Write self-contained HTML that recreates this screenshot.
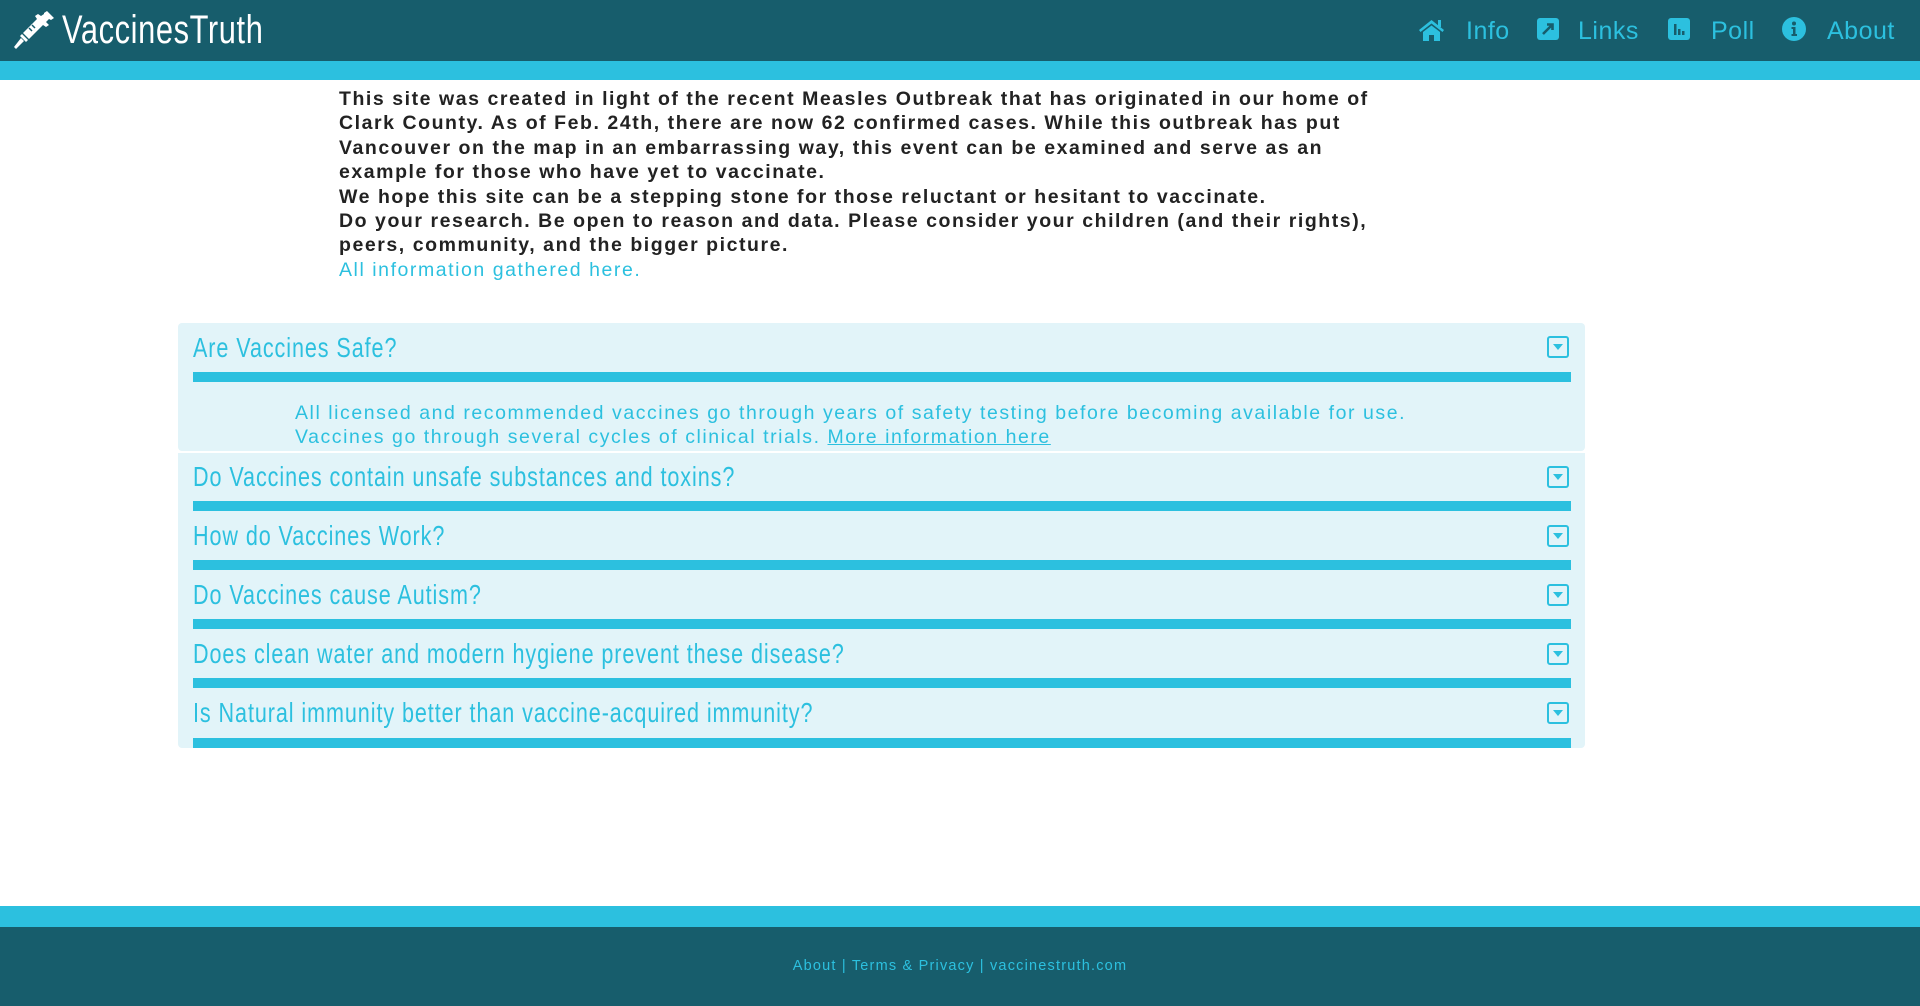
<!DOCTYPE html>
<html><head><meta charset="utf-8"><style>
*{margin:0;padding:0;box-sizing:border-box}
body{width:1920px;height:1006px;background:#fff;font-family:"Liberation Sans",Arial,sans-serif;position:relative;overflow:hidden}
.hdr{position:absolute;left:0;top:0;width:1920px;height:61px;background:#175d6c}
.hbar{position:absolute;left:0;top:61px;width:1920px;height:19px;background:#2cc0df}
.logo{position:absolute;left:62px;top:5px;color:#fff;font-family:"Liberation Sans",sans-serif;font-size:40px;line-height:50px;letter-spacing:0.8px;transform:scaleX(0.77);transform-origin:0 0;white-space:nowrap}
.nav{position:absolute;top:14px;color:#2cc0df;font-size:25px;line-height:34px;letter-spacing:0.5px}
.nav svg{position:absolute}
.intro{position:absolute;left:339px;top:87px;font-size:19.5px;line-height:24.4px;font-weight:bold;color:#222;letter-spacing:1.55px;white-space:nowrap}
.intro a{color:#2cc0df;font-weight:normal;text-decoration:none}
.acc{position:absolute;left:178px;width:1407px;background:#e2f4f9;border-radius:4px}
.acc .t{position:absolute;left:15px;top:8px;font-family:"Liberation Sans",sans-serif;font-size:28px;line-height:34px;color:#2cc0df;letter-spacing:1.2px;white-space:nowrap;transform:scaleX(0.77);transform-origin:0 0}
.acc .b{position:absolute;left:15px;width:1378px;height:10px;background:#2cc0df}
.acc .i{position:absolute;left:1369px;width:22px;height:22px;border:2px solid #2cc0df;border-radius:3px}
.acc .i:after{content:"";position:absolute;left:4px;top:6px;border-left:5px solid transparent;border-right:5px solid transparent;border-top:6px solid #2cc0df}
.acc .c{position:absolute;left:117px;top:78px;font-size:19.5px;line-height:24.4px;color:#2cc0df;letter-spacing:1.55px;white-space:nowrap}
.acc .c a{color:#2cc0df;text-decoration:underline}
.fbar{position:absolute;left:0;top:906px;width:1920px;height:21px;background:#2cc0df}
.ftr{position:absolute;left:0;top:927px;width:1920px;height:79px;background:#175d6c;color:#2cc0df;font-size:14.5px;text-align:center;line-height:79px;letter-spacing:1.2px}
</style></head><body>
<div class="hdr"></div><div class="hbar"></div>
<svg style="position:absolute;left:14px;top:11px" width="40" height="38" viewBox="0 0 40 38">
<g fill="#fff"><path d="M30 2 L33 0 L40 7 L37 9 L35 8 L32 11 L35 14 L32 16 L29 14 L15 28 L9 22 L23 8 L21 5 L24 3 L27 5 L30 3 Z"/><path d="M8 23 L14 29 L12 31 L6 25 Z"/><path d="M7 27 L10 30 L2 38 L0 36 Z"/></g>
<g stroke="#175d6c" stroke-width="1.5"><line x1="15" y1="17" x2="18" y2="20"/><line x1="18" y1="14" x2="21" y2="17"/></g>
</svg>
<div class="logo">VaccinesTruth</div>
<div class="nav" style="left:1417px;width:100px">
<svg style="left:0;top:3px" width="29" height="24" viewBox="0 0 29 24"><path d="M14.5 3 L27 13 L25.5 15 L14.5 6.5 L3.5 15 L2 13 Z" fill="#2cc0df"/><rect x="21" y="3" width="3" height="7" fill="#2cc0df"/><path d="M6 15 L14.5 8.5 L23 15 V24 H17 V18 H12 V24 H6 Z" fill="#2cc0df"/></svg>
<span style="position:absolute;left:49px;top:0">Info</span></div>
<div class="nav" style="left:1537px;width:120px">
<svg style="left:0;top:4px" width="22" height="22" viewBox="0 0 22 22"><rect width="22" height="22" rx="3" fill="#2cc0df"/><path d="M6 16 L15 7 M10 6.5 H15.5 V12" stroke="#175d6c" stroke-width="2.6" fill="none"/></svg>
<span style="position:absolute;left:41px;top:0">Links</span></div>
<div class="nav" style="left:1668px;width:100px">
<svg style="left:0;top:4px" width="22" height="22" viewBox="0 0 22 22"><rect width="22" height="22" rx="3" fill="#2cc0df"/><rect x="6" y="6" width="2.5" height="11" fill="#175d6c"/><rect x="10" y="11" width="2.5" height="6" fill="#175d6c"/><rect x="14" y="13" width="2.5" height="4" fill="#175d6c"/></svg>
<span style="position:absolute;left:43px;top:0">Poll</span></div>
<div class="nav" style="left:1782px;width:120px">
<svg style="left:0;top:3px" width="24" height="24" viewBox="0 0 24 24"><circle cx="12" cy="12" r="12" fill="#2cc0df"/><circle cx="12" cy="6.5" r="2" fill="#175d6c"/><path d="M9.5 10 H13.5 V17 H15 V19 H9.5 V17 H11 V12 H9.5 Z" fill="#175d6c"/></svg>
<span style="position:absolute;left:45px;top:0">About</span></div>

<div class="intro">This site was created in light of the recent Measles Outbreak that has originated in our home of<br>Clark County. As of Feb. 24th, there are now 62 confirmed cases. While this outbreak has put<br>Vancouver on the map in an embarrassing way, this event can be examined and serve as an<br>example for those who have yet to vaccinate.<br>We hope this site can be a stepping stone for those reluctant or hesitant to vaccinate.<br>Do your research. Be open to reason and data. Please consider your children (and their rights),<br>peers, community, and the bigger picture.<br><a>All information gathered here.</a></div>

<div class="acc" style="top:323px;height:128px"><div class="t">Are Vaccines Safe?</div><div class="i" style="top:13px"></div><div class="b" style="top:49px"></div>
<div class="c">All licensed and recommended vaccines go through years of safety testing before becoming available for use.<br>Vaccines go through several cycles of clinical trials. <a>More information here</a></div></div>
<div class="acc" style="top:453px;height:295px;border-radius:0 0 4px 4px">
<div class="t" style="top:7px">Do Vaccines contain unsafe substances and toxins?</div><div class="i" style="top:13px"></div><div class="b" style="top:48px"></div>
<div class="t" style="top:66px">How do Vaccines Work?</div><div class="i" style="top:72px"></div><div class="b" style="top:107px"></div>
<div class="t" style="top:125px">Do Vaccines cause Autism?</div><div class="i" style="top:131px"></div><div class="b" style="top:166px"></div>
<div class="t" style="top:184px">Does clean water and modern hygiene prevent these disease?</div><div class="i" style="top:190px"></div><div class="b" style="top:225px"></div>
<div class="t" style="top:243px">Is Natural immunity better than vaccine-acquired immunity?</div><div class="i" style="top:249px"></div><div class="b" style="top:285px"></div>
</div>

<div class="fbar"></div>
<div class="ftr">About | Terms &amp; Privacy | vaccinestruth.com</div>
</body></html>
